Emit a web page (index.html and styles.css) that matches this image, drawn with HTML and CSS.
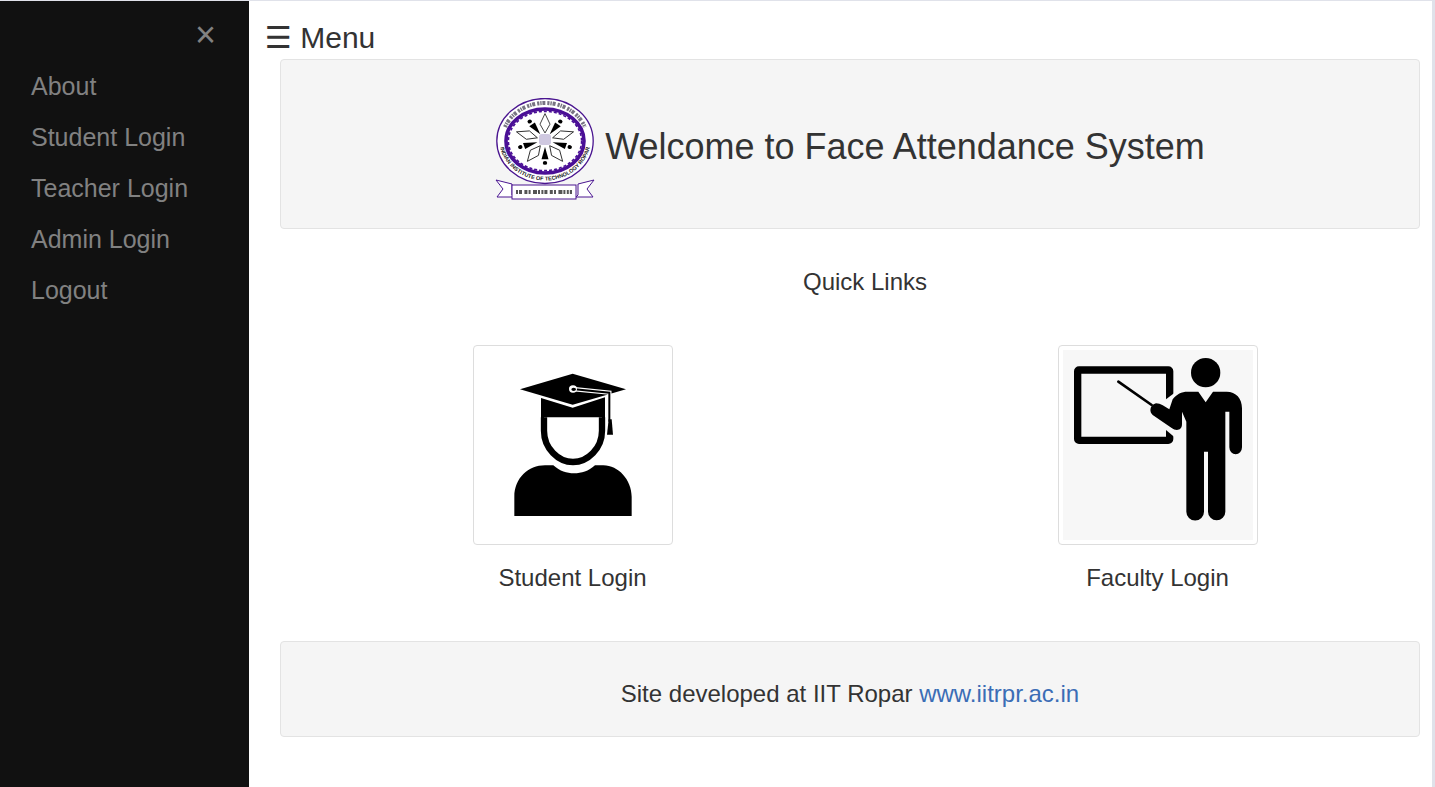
FILE: index.html
```html
<!DOCTYPE html>
<html lang="en">
<head>
<meta charset="utf-8">
<title>Face Attendance System</title>
<link rel="stylesheet" href="styles.css">
</head>
<body>
<div class="page">
  <nav class="sidebar">
    <a class="close" href="#">×</a>
    <a class="nav-link" href="#">About</a>
    <a class="nav-link" href="#">Student Login</a>
    <a class="nav-link" href="#">Teacher Login</a>
    <a class="nav-link" href="#">Admin Login</a>
    <a class="nav-link" href="#">Logout</a>
  </nav>
  <main class="main">
    <div class="menu"><span class="burger">☰</span> Menu</div>
    <div class="container">
      <header class="well hero">
        <svg class="logo" viewBox="495 98 100 102" aria-label="IIT Ropar logo">
          <defs>
            <path id="ringBottom" d="M499 138 A46 42.5 0 0 0 591 138"/>
          </defs>
          <ellipse cx="545" cy="141" rx="48.2" ry="42.5" fill="#fff" stroke="#4a1590" stroke-width="1.3"/>
          <path d="M505 127 A43 38 0 0 1 585 127" fill="none" stroke="#4a4458" stroke-width="4" stroke-dasharray="2.2 .9 1.4 .8 3 2" opacity=".75"/>
          <text class="logo-en"><textPath href="#ringBottom" startOffset="50%" text-anchor="middle">INDIAN INSTITUTE OF TECHNOLOGY ROPAR</textPath></text>
          <ellipse cx="545" cy="141" rx="39" ry="32" fill="#fff" stroke="#4a0f96" stroke-width="3.6"/>
          <ellipse cx="545" cy="141" rx="36.6" ry="29.6" fill="none" stroke="#4a0f96" stroke-width="1.6" stroke-dasharray="3 2"/>
          <g transform="translate(545 140) scale(1 .88) translate(-545 -140)">
            <path class="leaf" d="M545 132 L540 122 L545 110 L550 122Z"/>
            <path class="leaf" d="M545 132 L540 122 L545 110 L550 122Z" transform="rotate(72 545 140)"/>
            <path class="leaf" d="M545 132 L540 122 L545 110 L550 122Z" transform="rotate(144 545 140)"/>
            <path class="leaf" d="M545 132 L540 122 L545 110 L550 122Z" transform="rotate(216 545 140)"/>
            <path class="leaf" d="M545 132 L540 122 L545 110 L550 122Z" transform="rotate(288 545 140)"/>
            <g transform="rotate(36 545 140)"><path d="M545 132 L541.5 118 H548.5Z"/><circle cx="545" cy="114" r="2.2"/></g>
            <g transform="rotate(108 545 140)"><path d="M545 132 L541.5 118 H548.5Z"/><circle cx="545" cy="114" r="2.2"/></g>
            <g transform="rotate(180 545 140)"><path d="M545 132 L541.5 118 H548.5Z"/><circle cx="545" cy="114" r="2.2"/></g>
            <g transform="rotate(252 545 140)"><path d="M545 132 L541.5 118 H548.5Z"/><circle cx="545" cy="114" r="2.2"/></g>
            <g transform="rotate(324 545 140)"><path d="M545 132 L541.5 118 H548.5Z"/><circle cx="545" cy="114" r="2.2"/></g>
          </g>
          <rect x="539" y="134" width="12" height="11" rx="3" fill="#cfc8e0"/>
          <path d="M496 180 L512 184 V195 L514 197 L497 197 L503 189Z" fill="#fff" stroke="#4a1590" stroke-width="1"/>
          <path d="M594 180 L578 184 V195 L576 197 L593 197 L587 189Z" fill="#fff" stroke="#4a1590" stroke-width="1"/>
          <rect x="512" y="185" width="64" height="14" fill="#fff" stroke="#4a1590" stroke-width="1"/>
          <path d="M516 192 H572" stroke="#555" stroke-width="4" stroke-dasharray="2 1 3 2.4 3 1.2 2 2.4 4 1 2 1.4"/>
        </svg>
        <h1 class="title">Welcome to Face Attendance System</h1>
      </header>
      <div class="links-row">
        <p class="quick">Quick Links</p>
        <div class="cards">
          <a class="card" href="#">
            <span class="thumb">
              <svg class="thumb-art" viewBox="24 30 570 570" aria-label="Student">
                <path d="M150 148 L308 101 L468 148 L308 194Z"/>
                <path d="M213 174 L308 203 L405 172 V238 H213Z"/>
                <path d="M222 232 V272 C222 325 265 366 309 366 C353 366 396 325 396 272 V232" fill="#fff" stroke="#000" stroke-width="19"/>
                <path d="M133 528 V470 C133 415 175 376 225 376 H250 C270 394 290 400 312 400 C335 400 355 394 375 376 H400 C445 376 485 420 485 470 V528Z"/>
                <path d="M307 147 L418 158 V245" fill="none" stroke="#fff" stroke-width="13"/>
                <path d="M307 147 L418 158 V245" fill="none" stroke="#000" stroke-width="6"/>
                <ellipse cx="309" cy="147" rx="12" ry="11" fill="#fff"/>
                <ellipse cx="311" cy="148" rx="7" ry="5"/>
                <path d="M416 238 H425 L429 284 H411Z"/>
              </svg>
            </span>
            <span class="card-label">Student Login</span>
          </a>
          <a class="card" href="#">
            <span class="thumb thumb-grey">
              <svg class="thumb-art" viewBox="39 30 570 570" aria-label="Faculty">
                <rect x="83" y="90" width="276" height="211" rx="4" fill="none" stroke="#000" stroke-width="22"/>
                <path d="M348 178 L372 160 V290 L348 270Z" fill="#f7f7f7"/>
                <path d="M205 125 L305 195" stroke="#000" stroke-width="8" stroke-linecap="round"/>
                <circle cx="467" cy="98" r="44"/>
                <path d="M412 155 H445 L467 187 L489 155 H530 C558 155 576 175 576 205 V322 A19 21 0 0 1 538 322 V215 H526 V515 A26 26 0 0 1 474 515 V335 H462 V515 A26 26 0 0 1 409 515 V245 L396 215 V252 C396 272 378 274 365 264 L308 225 C296 214 300 195 318 190 C332 190 345 200 358 208 L368 178 C380 162 395 155 412 155Z"/>
              </svg>
            </span>
            <span class="card-label">Faculty Login</span>
          </a>
        </div>
      </div>
      <footer class="well foot">Site developed at IIT Ropar <a class="foot-link" href="#">www.iitrpr.ac.in</a></footer>
    </div>
  </main>
</div>
</body>
</html>
```

FILE: styles.css
```css
* { box-sizing: border-box; }
html, body { height: 100%; }
body {
  margin: 0;
  padding: 1px 3px 0 0;
  background: #e0e2ea;
  color: #333;
  font-family: "Liberation Sans", Arial, sans-serif;
  overflow: hidden;
}
a { text-decoration: none; }
.page { display: flex; height: 786px; background: #fff; }
.sidebar {
  width: 249px;
  flex: none;
  background: #111;
  display: flex;
  flex-direction: column;
  padding-top: 60px;
  position: relative;
}
.close {
  position: absolute;
  left: 195px;
  top: 13px;
  color: #818181;
  font-size: 36px;
  line-height: 41px;
}
.nav-link {
  display: block;
  padding: 8px 8px 8px 31px;
  color: #818181;
  font-size: 25px;
  line-height: 35px;
}
.main { flex: 1; min-width: 0; overflow: hidden; }
.menu {
  margin-left: 16px;
  height: 58px;
  padding-top: 19px;
  font-size: 30px;
  line-height: 36px;
}
.burger { font-family: "DejaVu Sans", sans-serif; }
.container { margin-left: 31px; width: 1140px; }
.well {
  background: #f5f5f5;
  border: 1px solid #e3e3e3;
  border-radius: 4px;
}
.hero {
  height: 170px;
  display: flex;
  align-items: center;
  justify-content: center;
  gap: 10px;
}
.logo { width: 100px; height: 102px; flex: none; margin-top: 10px; }
.leaf { fill: #fff; stroke: #222; stroke-width: .9; }
.logo-en { font: bold 5.5px "Liberation Sans", sans-serif; fill: #222; }
.title {
  margin: 6px 0 0;
  font-size: 36px;
  font-weight: 400;
  line-height: 40px;
  color: #333;
}
.links-row { width: 1170px; }
.quick {
  margin: 0;
  padding-top: 36px;
  height: 116px;
  font-size: 24px;
  line-height: 34px;
  text-align: center;
}
.cards { display: grid; grid-template-columns: 585px 585px; }
.card {
  display: flex;
  flex-direction: column;
  align-items: center;
  color: #333;
}
.thumb {
  display: block;
  width: 200px;
  height: 200px;
  padding: 4px;
  background: #fff;
  border: 1px solid #ddd;
  border-radius: 4px;
}
.thumb-grey .thumb-art { background: #f7f7f7; }
.thumb-art { display: block; width: 190px; height: 190px; }
.card-label {
  margin-top: 16px;
  font-size: 24px;
  line-height: 34px;
}
.foot {
  margin-top: 46px;
  height: 96px;
  padding-top: 35px;
  font-size: 24px;
  line-height: 34px;
  text-align: center;
}
.foot-link { color: #3b6db5; }
```
